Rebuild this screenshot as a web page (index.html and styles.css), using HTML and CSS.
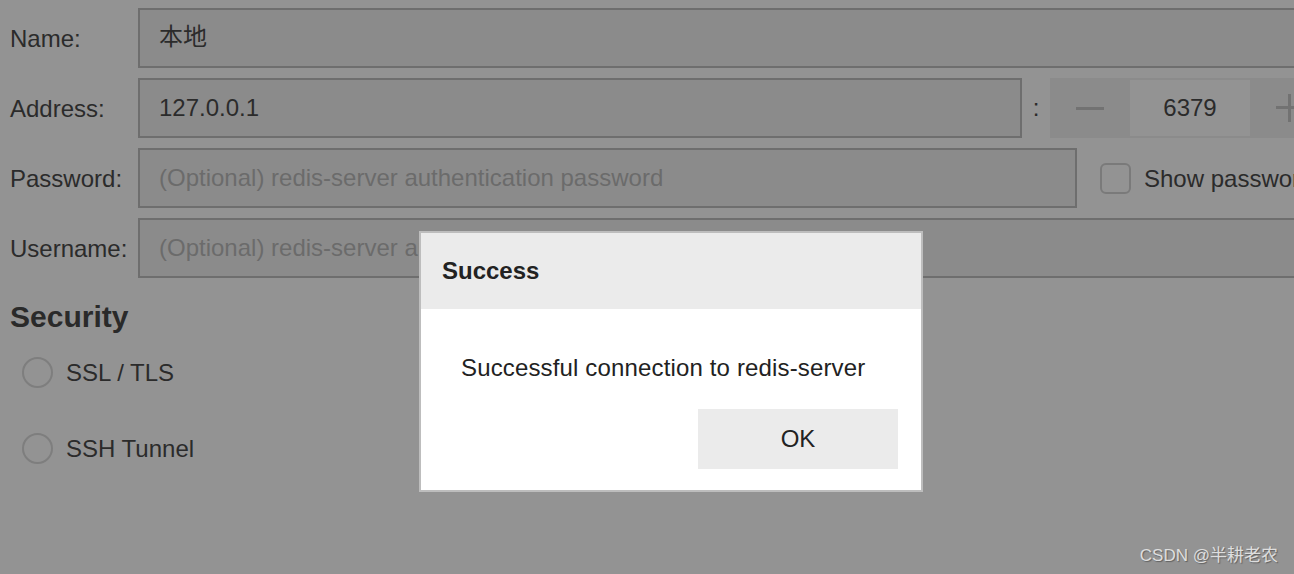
FILE: index.html
```html
<!DOCTYPE html>
<html lang="en">
<head>
<meta charset="utf-8">
<title>Connection</title>
<link rel="stylesheet" href="styles.css">
</head>
<body>
<div class="page">
  <div class="form">
    <div class="row">
      <div class="label">Name:</div>
      <div class="input input-full cjk">本地</div>
    </div>
    <div class="row">
      <div class="label">Address:</div>
      <div class="input input-address">127.0.0.1</div>
      <div class="colon">:</div>
      <div class="spinner">
        <div class="spin-btn"><span class="minus"></span></div>
        <div class="spin-field">6379</div>
        <div class="spin-btn"><span class="plus"></span></div>
      </div>
    </div>
    <div class="row">
      <div class="label">Password:</div>
      <div class="input input-password placeholder">(Optional) redis-server authentication password</div>
      <div class="checkbox"></div>
      <div class="check-label">Show password</div>
    </div>
    <div class="row">
      <div class="label">Username:</div>
      <div class="input input-full placeholder">(Optional) redis-server authentication username</div>
    </div>
  </div>

  <h2 class="section-title">Security</h2>
  <div class="radios">
    <div class="radio-row"><span class="radio"></span><span class="radio-label">SSL / TLS</span></div>
    <div class="radio-row"><span class="radio"></span><span class="radio-label">SSH Tunnel</span></div>
  </div>

  <div class="dialog">
    <div class="dialog-head">Success</div>
    <div class="dialog-body">
      <div class="dialog-msg">Successful connection to redis-server</div>
      <div class="dialog-actions"><div class="btn">OK</div></div>
    </div>
  </div>

  <div class="watermark">CSDN @半耕老农</div>
</div>
</body>
</html>
```
FILE: styles.css
```css
html, body {
  margin: 0;
  padding: 0;
  width: 1294px;
  height: 574px;
  overflow: hidden;
  background: #939393;
}
body {
  font-family: "Liberation Sans", "Noto Sans CJK SC", Arial, sans-serif;
  color: #2b2b2b;
}
.page {
  position: relative;
  width: 1294px;
  height: 574px;
  overflow: hidden;
}
.form {
  width: 1320px;
  padding: 8px 0 0 10px;
  display: flex;
  flex-direction: column;
  gap: 10px;
}
.row {
  display: flex;
  align-items: center;
  height: 60px;
}
.label {
  width: 128px;
  flex: none;
  font-size: 24px;
  line-height: 30px;
  padding-top: 2px;
}
.input {
  height: 60px;
  box-sizing: border-box;
  border: 2px solid #6e6e6e;
  background: #8b8b8b;
  padding-left: 19px;
  display: flex;
  align-items: center;
  font-size: 24px;
  white-space: nowrap;
  overflow: hidden;
  flex: none;
}
.cjk { padding-bottom: 7px; }
.input-full { width: 1192px; }
.input-address { width: 884px; }
.input-password { width: 939px; }
.placeholder { color: #6b6b6b; }
.colon {
  width: 28px;
  flex: none;
  text-align: center;
  font-size: 24px;
  line-height: 30px;
}
.spinner {
  display: flex;
  height: 60px;
  width: 280px;
  flex: none;
  background: #8b8b8b;
}
.spin-btn {
  width: 80px;
  display: flex;
  align-items: center;
  justify-content: center;
  position: relative;
}
.minus {
  width: 28px;
  height: 3px;
  background: #727272;
}
.plus {
  width: 28px;
  height: 28px;
  position: relative;
}
.plus::before, .plus::after {
  content: "";
  position: absolute;
  background: #727272;
}
.plus::before { left: 0; right: 0; top: 12px; height: 3px; }
.plus::after { top: 0; bottom: 0; left: 12px; width: 3px; }
.spin-field {
  width: 120px;
  margin: 2px 0;
  background: #939393;
  display: flex;
  align-items: center;
  justify-content: center;
  font-size: 24px;
}
.checkbox {
  width: 31px;
  height: 31px;
  box-sizing: border-box;
  border: 2px solid #7a7a7a;
  border-radius: 6px;
  margin-left: 23px;
  flex: none;
}
.check-label {
  margin-left: 13px;
  font-size: 24px;
  white-space: nowrap;
  padding-top: 2px;
}
.section-title {
  margin: 22px 0 0 10px;
  font-size: 30px;
  line-height: 34px;
  font-weight: bold;
  color: #2a2a2a;
}
.radios {
  margin-top: 18px;
  padding-left: 22px;
  display: flex;
  flex-direction: column;
  gap: 36px;
}
.radio-row {
  display: flex;
  align-items: center;
  height: 40px;
}
.radio {
  width: 31px;
  height: 31px;
  box-sizing: border-box;
  border: 2px solid #7e7e7e;
  border-radius: 50%;
  flex: none;
}
.radio-label {
  margin-left: 13px;
  font-size: 24px;
  padding-top: 2px;
}
.dialog {
  position: absolute;
  left: 419px;
  top: 231px;
  width: 504px;
  height: 261px;
  box-sizing: border-box;
  border: 2px solid #bdbdbd;
  background: #ffffff;
  display: flex;
  flex-direction: column;
}
.dialog-head {
  height: 76px;
  flex: none;
  background: #ebebeb;
  padding-left: 21px;
  display: flex;
  align-items: center;
  font-size: 24px;
  font-weight: bold;
  color: #222;
}
.dialog-body {
  flex: 1;
  display: flex;
  flex-direction: column;
  padding: 44px 23px 0 40px;
}
.dialog-msg {
  font-size: 24px;
  line-height: 30px;
  color: #222;
  letter-spacing: 0.15px;
}
.dialog-actions {
  margin-top: 26px;
  display: flex;
  justify-content: flex-end;
}
.btn {
  width: 200px;
  height: 60px;
  background: #ebebeb;
  display: flex;
  align-items: center;
  justify-content: center;
  font-size: 24px;
  color: #222;
}
.watermark {
  position: absolute;
  right: 16px;
  bottom: 8px;
  font-size: 17px;
  color: #dedede;
  text-shadow: 1px 1px 1px rgba(0, 0, 0, 0.35);
  white-space: nowrap;
}
```
